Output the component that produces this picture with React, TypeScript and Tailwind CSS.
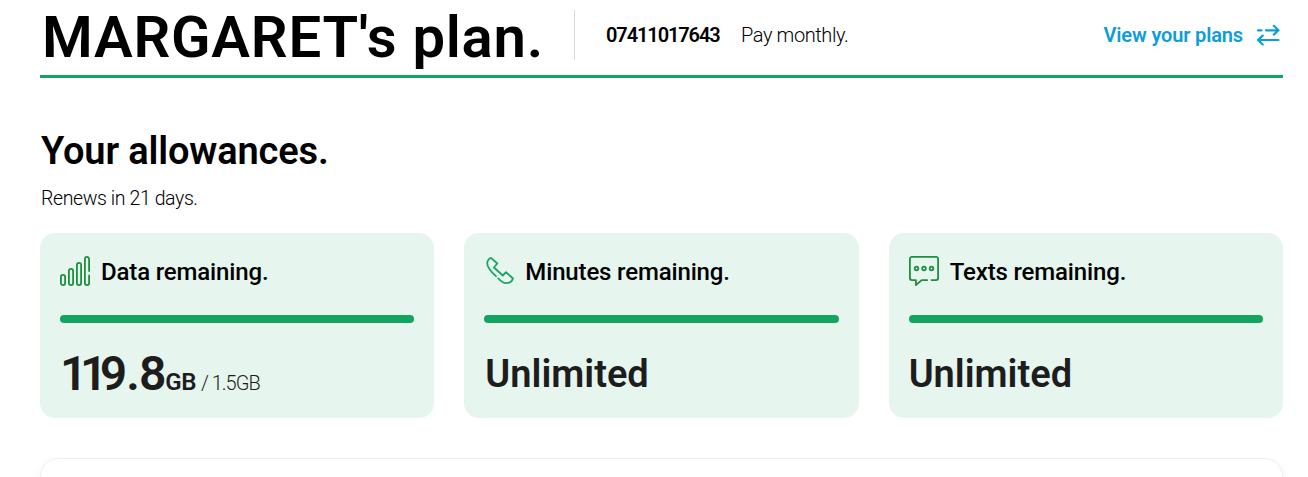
import type { ReactNode } from "react";

function SignalIcon() {
  return (
    <svg width="30" height="30" viewBox="0 0 30 30" fill="none" stroke="#1f8f3f" strokeWidth="1.8" strokeLinecap="round">
      <rect x="0.9" y="18.9" width="4.2" height="10.2" rx="2.1" />
      <rect x="8.9" y="12.9" width="4.2" height="16.2" rx="2.1" />
      <rect x="16.9" y="6.9" width="4.2" height="22.2" rx="2.1" />
      <path d="M29.1 15V3a2.1 2.1 0 0 0-4.2 0v24a2.1 2.1 0 0 0 4.2 0v-7.5" />
    </svg>
  );
}

function PhoneIcon() {
  return (
    <svg width="30" height="30" viewBox="0 0 30 30" fill="none" stroke="#1ba563" strokeWidth="1.8" strokeLinecap="round" strokeLinejoin="round">
      <path d="M12 20.2C8.2 16.8 3.2 12.2 3.2 7.200c0-2.300 2-5 3.800-5.400L13.300 7.500l-3.400 4L18.800 19.500 22 16.200l7 6.300c-.8 2.600-3.500 4.700-7 4.700-3 0-5.600-2.500-7.700-4.800" />
    </svg>
  );
}

function MessageIcon() {
  return (
    <svg width="30" height="30" viewBox="0 0 30 30" fill="none" stroke="#1f8f3f" strokeWidth="1.8" strokeLinecap="round" strokeLinejoin="round">
      <path d="M22.500 24.100h4.600a2 2 0 0 0 2-2V2.900a2 2 0 0 0-2-2H2.900a2 2 0 0 0-2 2v19.200a2 2 0 0 0 2 2h4v5l5.800-5h5.600" />
      <circle cx="7.500" cy="12.500" r="1.800" />
      <circle cx="15" cy="12.500" r="1.800" />
      <circle cx="22.500" cy="12.500" r="1.800" />
    </svg>
  );
}

function SwapIcon() {
  return (
    <svg width="24" height="24" viewBox="0 0 24 24" fill="none" stroke="#0d9ddb" strokeWidth="2.200" strokeLinecap="round" strokeLinejoin="round">
      <path d="M2 7.300h3.500M10 7.300h12M17.800 2.800 22.500 7.300l-4.700 4.300" />
      <path d="M22.500 17H2M6.700 12.600 2 17l4.700 4.500" />
    </svg>
  );
}

type AllowanceCardProps = {
  icon: ReactNode;
  title: string;
  children: ReactNode;
};

function AllowanceCard({ icon, title, children }: AllowanceCardProps) {
  return (
    <section className="h-[185px] rounded-[15px] bg-[#e6f5ee] px-5 pt-[23px]">
      <div className="flex h-[30px] items-center gap-[11px]">
        {icon}
        <h3 className="pt-[2px] text-[24px] font-medium leading-none tracking-[-0.15px] text-black">{title}</h3>
      </div>
      <div className="mt-[29px] h-2 rounded-full bg-[#13a45f]" />
      <div className="mt-[26px] flex h-[50px] items-center text-[#1d1d1d]">{children}</div>
    </section>
  );
}

export default function App() {
  return (
    <main className="h-[477px] overflow-hidden whitespace-nowrap bg-white pl-10 pr-[25px] font-['Roboto',sans-serif] text-black">
      <header className="flex h-[78px] items-start border-b-3 border-[#13a45f]">
        <h1 className="mt-2 w-[534px] pl-[2px] text-[58px] font-semibold leading-[58px] tracking-[0.75px]">MARGARET's plan.</h1>
        <div className="mt-[10px] flex h-[50px] flex-1 items-center border-l border-[#dadada] pl-[31px] text-[20px] leading-none">
          <span className="w-[135px] font-semibold tracking-[-1.1px]">07411017643</span>
          <span className="font-light tracking-[-0.4px]">Pay monthly.</span>
          <a href="#" className="ml-auto flex items-center gap-[13px] pr-[3px] text-[#0d9ddb]">
            <span className="font-semibold tracking-[-0.15px]">View your plans</span>
            <SwapIcon />
          </a>
        </div>
      </header>

      <h2 className="mt-[54px] pl-[1px] text-[38px] font-semibold leading-[38px] tracking-[-0.15px]">Your allowances.</h2>
      <p className="mt-[19px] pl-[1px] text-[19.5px] font-light leading-5 tracking-[-0.4px]">Renews in 21 days.</p>

      <div className="mt-[24px] grid grid-cols-3 gap-[30px]">
        <AllowanceCard icon={<SignalIcon />} title="Data remaining.">
          <p className="flex items-baseline leading-none">
            <span className="text-[48px] font-semibold tracking-[-1px]">
              <span className="tracking-[-7.5px]">11</span>9.8
            </span>
            <span className="text-[24px] font-semibold tracking-[-0.5px]">GB</span>
            <span className="ml-[5px] text-[20px] font-light tracking-[-1px]">/ 1.5GB</span>
          </p>
        </AllowanceCard>
        <AllowanceCard icon={<PhoneIcon />} title="Minutes remaining.">
          <p className="pl-[1px] text-[38px] font-semibold leading-none">Unlimited</p>
        </AllowanceCard>
        <AllowanceCard icon={<MessageIcon />} title="Texts remaining.">
          <p className="text-[38px] font-semibold leading-none">Unlimited</p>
        </AllowanceCard>
      </div>

      <div className="mt-10 h-20 rounded-[18px] border border-[#efefef] shadow-[0_4px_12px_rgba(0,0,0,0.05)]" />
    </main>
  );
}
